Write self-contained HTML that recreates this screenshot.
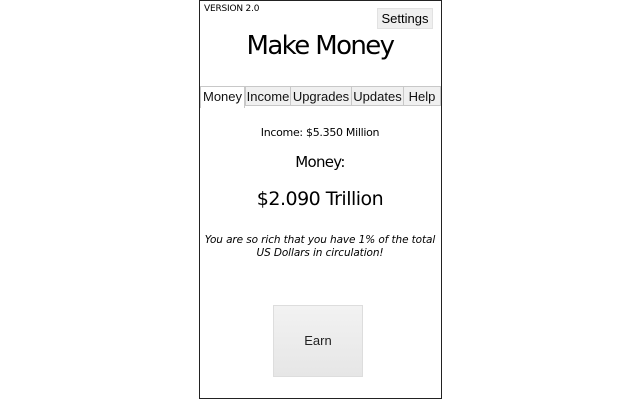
<!DOCTYPE html>
<html><head><style>
body{margin:0;width:640px;height:400px;background:#fff;position:relative;font-family:"DejaVu Sans","Liberation Sans",sans-serif;overflow:hidden}
.frame{position:absolute;left:199px;top:0;width:241px;height:397px;border:1px solid #222}
.abs{position:absolute}
.tab{position:absolute;top:86px;height:20px;background:#f0f0f0;border:1px solid #c8c8c8;box-sizing:border-box;font:13px "Liberation Sans",sans-serif;text-align:center;line-height:19px;color:#111}
</style></head><body>
<div class="frame"></div>
<div class="abs" style="left:204px;top:4px;font-size:9px;letter-spacing:-0.2px">VERSION 2.0</div>
<div class="abs" style="left:377px;top:8px;width:54px;height:19px;background:#efefef;border:1px solid #e2e2e2;font:13px 'Liberation Sans',sans-serif;text-align:center;line-height:19px">Settings</div>
<div class="abs" style="left:200px;width:240px;top:31px;text-align:center;font-size:26px;letter-spacing:-1.6px">Make Money</div>
<div class="abs" style="left:200px;width:240px;top:105px;border-top:1px solid #aaa"></div>
<div class="tab" style="left:200px;width:45px;background:#fff;border-bottom:none;height:22px">Money</div>
<div class="tab" style="left:245px;width:46px">Income</div>
<div class="tab" style="left:290px;width:62px">Upgrades</div>
<div class="tab" style="left:351px;width:53px">Updates</div>
<div class="tab" style="left:403px;width:38px">Help</div>
<div class="abs" style="left:200px;width:240px;top:126px;text-align:center;font-size:11px;letter-spacing:-0.3px">Income: $5.350 Million</div>
<div class="abs" style="left:200px;width:240px;top:153px;text-align:center;font-size:15px;letter-spacing:-0.7px">Money:</div>
<div class="abs" style="left:200px;width:240px;top:188px;text-align:center;font-size:19px;letter-spacing:-0.5px">$2.090 Trillion</div>
<div class="abs" style="left:200px;width:240px;top:234px;text-align:center;font-size:10.5px;font-style:italic;line-height:13px;letter-spacing:-0.1px;white-space:nowrap">You are so rich that you have 1% of the total<br>US Dollars in circulation!</div>
<div class="abs" style="left:273px;top:305px;width:90px;height:72px;background:linear-gradient(#f2f2f2,#e6e6e6);border:1px solid #ddd;box-sizing:border-box;font:13px 'Liberation Sans',sans-serif;text-align:center;line-height:70px;color:#222">Earn</div>
</body></html>
